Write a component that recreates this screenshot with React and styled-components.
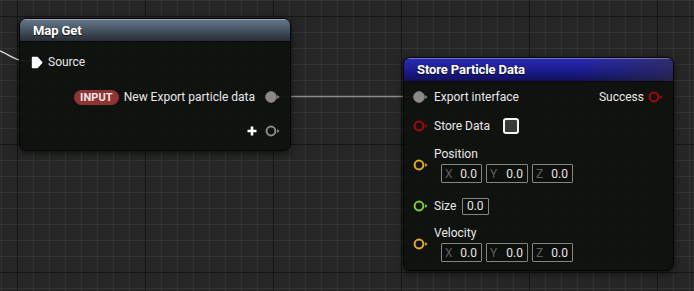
import React from 'react';
import styled, { createGlobalStyle } from 'styled-components';

const Global = createGlobalStyle`
  html, body { margin: 0; padding: 0; background: #262626; }
  body { font-family: Roboto, "Liberation Sans", sans-serif; }
`;

const Canvas = styled.div`
  position: relative;
  width: 694px;
  height: 291px;
  overflow: hidden;
  background-color: #262626;
  background-image:
    linear-gradient(to right, #151515 1px, transparent 1px),
    linear-gradient(to bottom, #151515 1px, transparent 1px),
    linear-gradient(to right, #333333 1px, transparent 1px),
    linear-gradient(to bottom, #333333 1px, transparent 1px);
  background-size: 128px 128px, 128px 128px, 16px 16px, 16px 16px;
  background-position: 17px 0, 0 16px, 1px 0, 0 0;
`;

const Wires = styled.svg`
  position: absolute;
  left: 0;
  top: 0;
`;

const Node = styled.div`
  position: absolute;
  left: ${(p) => p.$x}px;
  top: ${(p) => p.$y}px;
  width: ${(p) => p.$w}px;
  height: ${(p) => p.$h}px;
  box-sizing: border-box;
  border: 1px solid #050505;
  border-radius: 7px;
  background: rgba(15, 17, 15, 0.94);
  box-shadow: 0 2px 7px rgba(0, 0, 0, 0.6);
  display: flex;
  flex-direction: column;
  overflow: hidden;
`;

const Header = styled.div`
  height: ${(p) => p.$h}px;
  flex: none;
  display: flex;
  align-items: center;
  padding-left: 13px;
  color: #ffffff;
  font-weight: 700;
  font-size: 13px;
  letter-spacing: -0.1px;
  text-shadow: 0 1px 1px rgba(0, 0, 0, 0.7);
  background: ${(p) => p.$bg};
  box-shadow: inset 0 1px 0 rgba(255, 255, 255, 0.35), 0 1px 0 rgba(0, 0, 0, 0.5);
`;

const Body = styled.div`
  display: flex;
  flex-direction: column;
  padding: 0 10px 0 ${(p) => p.$pl}px;
`;

const Row = styled.div`
  height: ${(p) => p.$h || 22}px;
  margin-top: ${(p) => p.$mt || 0}px;
  display: flex;
  align-items: center;
  justify-content: ${(p) => (p.$end ? 'flex-end' : 'space-between')};
`;

const PinGroup = styled.div`
  display: flex;
  align-items: center;
  gap: ${(p) => p.$gap}px;
`;

const Label = styled.span`
  color: #e8e8e8;
  font-size: 12px;
  line-height: 16px;
  white-space: nowrap;
  margin-right: ${(p) => p.$mr || 0}px;
`;

const Badge = styled.span`
  height: 15px;
  padding: 0 6px;
  border-radius: 8px;
  background: #8e3434;
  color: #f0e6e6;
  font-size: 11px;
  font-weight: 700;
  line-height: 15px;
  letter-spacing: 0.1px;
  margin-right: 5px;
`;

const Check = styled.span`
  width: 12px;
  height: 12px;
  border: 2px solid #f4f4f4;
  border-radius: 3px;
  background: #3a3a3a;
  margin-left: 7px;
`;

const Column = styled.div`
  display: flex;
  flex-direction: column;
  gap: 2px;
`;

const Fields = styled.div`
  display: flex;
  gap: 4px;
  margin-left: 7px;
`;

const Field = styled.div`
  box-sizing: border-box;
  width: ${(p) => p.$w}px;
  height: ${(p) => p.$h || 19}px;
  border: 1px solid #858585;
  border-radius: 1px;
  display: flex;
  align-items: center;
  justify-content: ${(p) => (p.$axis ? 'space-between' : 'center')};
  padding: 0 4px 0 3px;
  font-size: 12px;
  color: #e6e6e6;
  background: rgba(0, 0, 0, 0.15);
`;

const Axis = styled.span`
  color: #5e5e5e;
`;

const PlusIcon = styled.svg`
  margin-right: 8px;
`;

const ExecPin = () => (
  <svg width="12" height="13" viewBox="0 0 12 13">
    <path d="M1.5 1.5 H6.3 L10.8 6.5 L6.3 11.5 H1.5 Z" fill="#fff" stroke="#fff" strokeWidth="1.4" strokeLinejoin="round" />
  </svg>
);

const DataPin = ({ color, filled }) => (
  <svg width="15" height="12" viewBox="0 0 15 12">
    <circle cx="6" cy="6" r={filled ? 5.4 : 4.4} fill={filled ? color : 'none'} stroke={color} strokeWidth={filled ? 0.8 : 2} />
    <path d="M12.2 4 L14.6 6 L12.2 8 Z" fill={color} />
  </svg>
);

const RED = '#a80808';
const YELLOW = '#e4b012';
const GREEN = '#7fd22c';
const GREY = '#8d8989';

const VectorFields = () => (
  <Fields>
    {['X', 'Y', 'Z'].map((a) => (
      <Field key={a} $w={a === 'Y' ? 42 : 41} $axis>
        <Axis>{a}</Axis>
        <span>0.0</span>
      </Field>
    ))}
  </Fields>
);

export default function App() {
  return (
    <>
      <Global />
      <Canvas>
        <Wires width="694" height="291">
          <path d="M0 51 C10 55, 14 60, 24 61 L31 61" stroke="#d6d6d6" strokeWidth="1.6" fill="none" />
          <path d="M278 96.5 L413 96.5" stroke="#8c8c8c" strokeWidth="1.5" fill="none" />
        </Wires>

        <Node $x={19} $y={18} $w={272} $h={133}>
          <Header $h={22} $bg="linear-gradient(to bottom, #66788a 0%, #4d5c6b 40%, #333c46 80%, #2a3038 100%)">
            Map Get
          </Header>
          <Body $pl={11}>
            <Row $mt={10} $h={22}>
              <PinGroup $gap={5}>
                <ExecPin />
                <Label>Source</Label>
              </PinGroup>
            </Row>
            <Row $mt={13} $h={22} $end>
              <Badge>INPUT</Badge>
              <Label $mr={10}>New Export particle data</Label>
              <DataPin color={GREY} filled />
            </Row>
            <Row $mt={12} $h={22} $end>
              <PlusIcon width="10" height="10" viewBox="0 0 10 10">
                <path d="M5 0.5 V9.5 M0.5 5 H9.5" stroke="#fff" strokeWidth="2.6" />
              </PlusIcon>
              <DataPin color={GREY} />
            </Row>
          </Body>
        </Node>

        <Node $x={403} $y={57} $w={271} $h={214}>
          <Header
            $h={23}
            $bg="linear-gradient(to right, rgba(0,0,0,0) 65%, rgba(50,50,60,0.55) 100%), linear-gradient(to bottom, #2b2bb4 0%, #1e1e96 45%, #16167a 75%, #111158 100%)"
          >
            Store Particle Data
          </Header>
          <Body $pl={9}>
            <Row $mt={5} $h={22}>
              <PinGroup $gap={6}>
                <DataPin color={GREY} filled />
                <Label>Export interface</Label>
              </PinGroup>
              <PinGroup $gap={4}>
                <Label>Success</Label>
                <DataPin color={RED} />
              </PinGroup>
            </Row>
            <Row $mt={7} $h={22}>
              <PinGroup $gap={6}>
                <DataPin color={RED} />
                <Label>Store Data</Label>
                <Check />
              </PinGroup>
            </Row>
            <Row $mt={9} $h={37}>
              <PinGroup $gap={6}>
                <DataPin color={YELLOW} />
                <Column>
                  <Label>Position</Label>
                  <VectorFields />
                </Column>
              </PinGroup>
            </Row>
            <Row $mt={12} $h={22}>
              <PinGroup $gap={6}>
                <DataPin color={GREEN} />
                <Label>Size</Label>
                <Field $w={27} $h={17}>0.0</Field>
              </PinGroup>
            </Row>
            <Row $mt={8} $h={37}>
              <PinGroup $gap={6}>
                <DataPin color={YELLOW} />
                <Column>
                  <Label>Velocity</Label>
                  <VectorFields />
                </Column>
              </PinGroup>
            </Row>
          </Body>
        </Node>
      </Canvas>
    </>
  );
}
